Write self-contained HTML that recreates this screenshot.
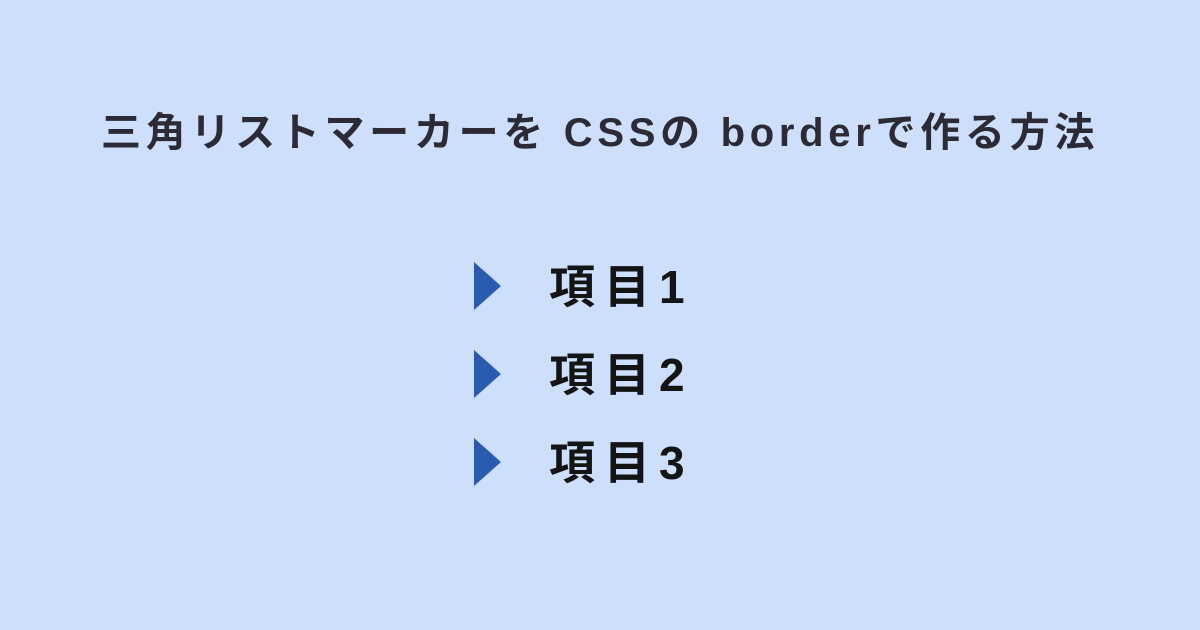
<!DOCTYPE html>
<html><head><meta charset="utf-8"><style>
html,body{margin:0;padding:0}
body{width:1200px;height:630px;background:#cddffb;position:relative;overflow:hidden;font-family:"Liberation Sans","Noto Sans CJK JP",sans-serif;}
.t{position:absolute;left:0;width:1200px;top:108px;text-align:center;font-size:40px;font-weight:bold;color:#2b2a35;letter-spacing:4.7px;line-height:50px;white-space:nowrap}
.tri{position:absolute;left:474px;width:0;height:0;border-left:27px solid #2b5bb0;border-top:24px solid transparent;border-bottom:24px solid transparent}
.i{position:absolute;left:549px;font-size:46px;font-weight:bold;color:#141414;line-height:50px;letter-spacing:9px}
</style></head><body>
<div class="t">三角リストマーカーを CSSの borderで作る方法</div>
<div class="tri" style="top:262px"></div><div class="i" style="top:262px">項目1</div>
<div class="tri" style="top:350px"></div><div class="i" style="top:350px">項目2</div>
<div class="tri" style="top:438px"></div><div class="i" style="top:438px">項目3</div>
</body></html>
